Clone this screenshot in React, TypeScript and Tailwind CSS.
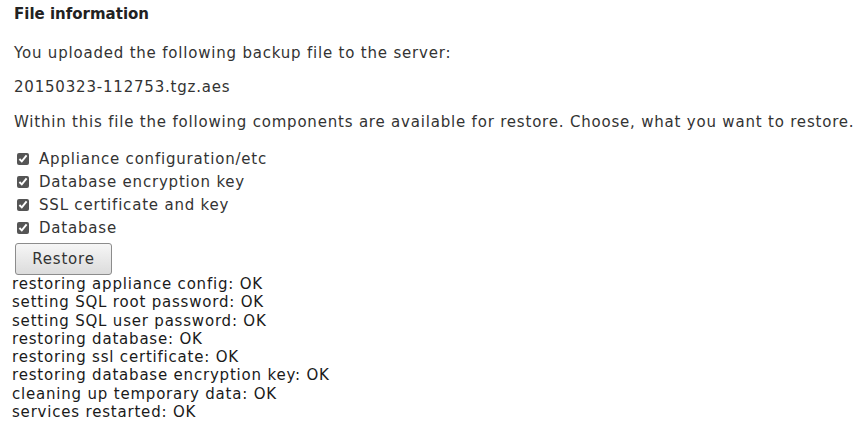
const components = [
  'Appliance configuration/etc',
  'Database encryption key',
  'SSL certificate and key',
  'Database',
];

const log = [
  'restoring appliance config: OK',
  'setting SQL root password: OK',
  'setting SQL user password: OK',
  'restoring database: OK',
  'restoring ssl certificate: OK',
  'restoring database encryption key: OK',
  'cleaning up temporary data: OK',
  'services restarted: OK',
];

export default function App() {
  return (
    <div className="min-h-screen bg-white font-['DejaVu_Sans',sans-serif] text-[15px] leading-[18px] tracking-[0.8px] text-[#333]">
      <div className="px-[14px] pt-[5px]">
        <h3 className="text-[15px] font-bold tracking-normal text-[#222]">File information</h3>
        <p className="mt-[21px]">You uploaded the following backup file to the server:</p>
        <p className="mt-[16px]">20150323-112753.tgz.aes</p>
        <p className="mt-[17px] whitespace-nowrap">
          Within this file the following components are available for restore. Choose, what you want to restore.
        </p>
        <div className="mt-[19px] flex flex-col gap-[5px] pl-[3px]">
          {components.map((c) => (
            <label key={c} className="flex items-center gap-[10px]">
              <input type="checkbox" defaultChecked className="h-[12px] w-[12px] accent-[#555]" />
              <span>{c}</span>
            </label>
          ))}
        </div>
        <button className="mt-[6px] ml-[1px] h-[32px] w-[97px] rounded-[3px] border border-[#8c8c8c] bg-gradient-to-b from-[#f6f6f6] to-[#dcdcdc] text-[#333]">
          Restore
        </button>
      </div>
      <div className="pl-[12px] text-[#1a1a1a] leading-[18.3px]">
        {log.map((l) => (
          <div key={l}>{l}</div>
        ))}
      </div>
    </div>
  );
}
